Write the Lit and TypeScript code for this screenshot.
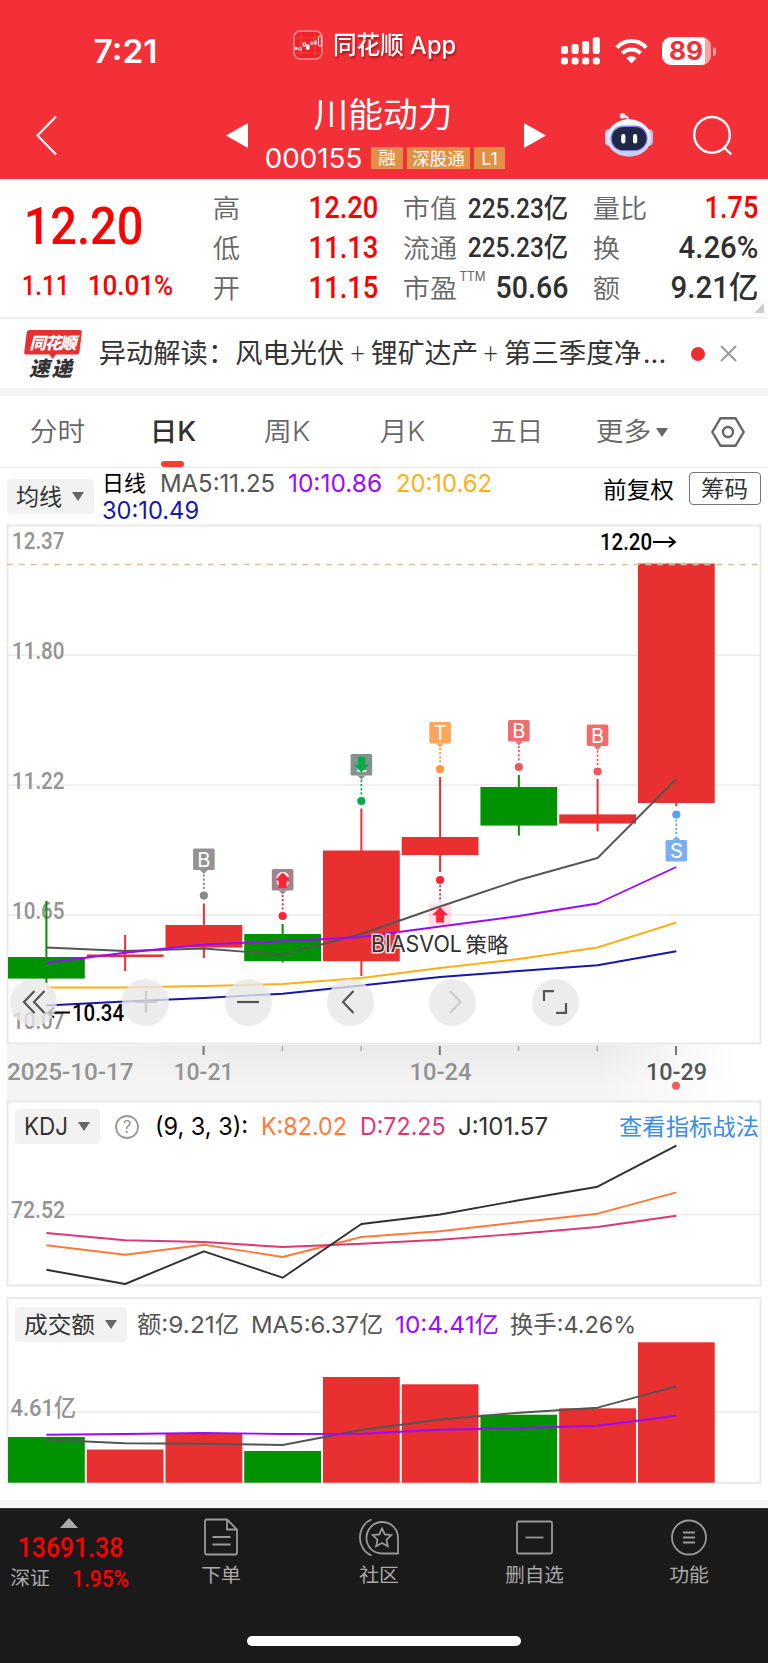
import { LitElement, html, svg, css } from "lit";
import { customElement } from "lit/decorators.js";

type Tab = { label: string; w: number; active?: boolean; more?: boolean };
type Candle = { up: boolean; top: number; bottom: number; high: number; low: number };
type Flag = {
  i: number; letter: string; y: number; dot: number; box: string; line: string; arrow?: "up" | "down"; below?: boolean;
};

const X0 = 46.4;
const STEP = 78.74;
const cx = (i: number) => X0 + STEP * i;

/** Inline text block whose height is its cap height and whose glyphs span the given width. */
const fit = (text: string, w: number, size: number, cls = "") => {
  const b = size * 0.045;
  const h = size * 0.72;
  return html`<svg class="fit ${cls}" width=${w} height=${h}>
    <text x=${-b} y=${h} font-size=${size} textLength=${w + 2 * b} lengthAdjust="spacingAndGlyphs">${text}</text>
  </svg>`;
};

/** Chart label starting at x, with its baseline at y. */
const label = (text: string, x: number, y: number, w: number, size: number, cls = "") => {
  const b = size * 0.045;
  return svg`<text class=${cls} x=${x - b} y=${y} font-size=${size} textLength=${w + 2 * b}
    lengthAdjust="spacingAndGlyphs">${text}</text>`;
};

const path = (ys: number[], cls: string) =>
  svg`<polyline class="line ${cls}" points=${ys.map((y, i) => `${cx(i)},${y}`).join(" ")}></polyline>`;

const caret = html`<svg class="caret" width="12" height="9"><path d="M0 0H12L6 9Z" fill="currentColor"/></svg>`;

const TABS: Tab[] = [
  { label: "分时", w: 53 },
  { label: "日K", w: 44, active: true },
  { label: "周K", w: 44 },
  { label: "月K", w: 43 },
  { label: "五日", w: 51 },
  { label: "更多", w: 53, more: true },
];

const CANDLES: Candle[] = [
  { up: false, top: 957, bottom: 978.6, high: 901, low: 983 },
  { up: true, top: 954.5, bottom: 957, high: 935, low: 971 },
  { up: true, top: 925, bottom: 947.6, high: 903.5, low: 958 },
  { up: false, top: 934, bottom: 961.2, high: 924, low: 962.5 },
  { up: true, top: 850.5, bottom: 961.2, high: 808.5, low: 976 },
  { up: true, top: 837, bottom: 855, high: 777, low: 872 },
  { up: false, top: 787, bottom: 825.6, high: 775, low: 835.6 },
  { up: true, top: 814.4, bottom: 823.5, high: 779, low: 831.3 },
  { up: true, top: 563.5, bottom: 803, high: 563.5, low: 806.3 },
];

const FLAGS: Flag[] = [
  { i: 2, letter: "B", y: 848.5, dot: 895.6, box: "#939393", line: "#888888" },
  { i: 3, letter: "C", y: 869, dot: 916, box: "#a1838b", line: "#ff2238", arrow: "up" },
  { i: 4, letter: "L", y: 754, dot: 801, box: "#82938b", line: "#08aa4c", arrow: "down" },
  { i: 5, letter: "T", y: 722, dot: 769.2, box: "#ffa55c", line: "#ff9a42" },
  { i: 6, letter: "B", y: 720, dot: 767, box: "#f16c6d", line: "#ea5a5c" },
  { i: 7, letter: "B", y: 724.5, dot: 771.5, box: "#f16c6d", line: "#ea5a5c" },
  { i: 8, letter: "S", y: 840, dot: 814.5, box: "#7ab0f3", line: "#5b9ff0", below: true },
];

const BARS = [1437, 1449.5, 1434, 1451, 1377, 1384.3, 1414.7, 1408.3, 1342.3];

@customElement("app-root")
export class AppRoot extends LitElement {
  static styles = css`
    :host { display: block; width: 768px; height: 1663px; overflow: hidden; background: #fff; color: #333;
      font-family: Roboto, "Noto Sans CJK SC", sans-serif; }
    * { box-sizing: border-box; }
    svg { display: block; flex: none; overflow: visible; }
    text { fill: currentColor; white-space: pre; }
    .fit { font-family: inherit; }
    .ui { font-family: Inter, "Noto Sans CJK SC", sans-serif; }
    .light { font-weight: 350; }
    .mid { font-weight: 500; }
    .semi { font-weight: 600; }
    .bold { font-weight: 700; }
    .red { color: #fe0000; }
    .dark { color: #303030; }
    .grey { color: #666; }
    .black { color: #000; }
    .c5 { color: #555; }
    .c10 { color: #9b09ff; }
    .c20 { color: #ffaf16; }
    .c30 { color: #1717a8; }
    .ck { color: #ff7a3a; }
    .cd { color: #dc3776; }
    .axis { color: #939393; }
    .letter { fill: #fff; }

    .top { height: 179px; background: #f33038; color: #fff; }
    .status { height: 91px; display: flex; align-items: flex-start; padding-left: 95px; }
    .time { padding-top: 40px; width: 198px; }
    .brand { display: flex; align-items: center; gap: 11px; padding-top: 30px; width: 268px; }
    .brand .fit { filter: drop-shadow(1px 2px 1px rgba(90, 0, 0, .55)); }
    .signals { display: flex; align-items: center; gap: 14.5px; padding-top: 37px; }
    .battery { display: flex; align-items: center; gap: 2px; }
    .cell { width: 49px; height: 28px; border-radius: 9px; display: flex; align-items: center; justify-content: center;
      background: linear-gradient(90deg, #fff 43px, #ffa0a3 43px); color: #f33038; padding-right: 1px; }
    .nub { width: 3px; height: 9px; border-radius: 0 3px 3px 0; background: #ff9a9e; }
    .titlebar { height: 88px; display: flex; align-items: center; padding-left: 36px; }
    .prev { margin-left: 169px; }
    .name { width: 276px; height: 88px; padding-top: 11px; display: flex; flex-direction: column; gap: 20.5px; }
    .name > .fit { margin-left: 66.5px; }
    .code { height: 22px; display: flex; align-items: center; padding-left: 18px; }
    .tags { display: flex; gap: 4px; margin-left: 10px; }
    .tag { height: 22px; padding: 0 8px; background: #e39047; display: flex; align-items: center; justify-content: center; }
    .tag.wide { padding: 0 6px; }
    .robot { margin-left: 58.5px; }
    .search { margin-left: 40.5px; }

    .quote { height: 140px; border-bottom: 2px solid #f1f1f1; display: flex; }
    .price { width: 214px; padding: 26.5px 0 0 23px; }
    .price > .fit { margin-left: 3px; }
    .change { display: flex; gap: 21px; margin-top: 31.5px; }
    .facts { width: 543px; padding-top: 8.5px; display: grid; grid-template-columns: 162.5px 163px 163px;
      grid-auto-rows: 39.8px; column-gap: 27px; }
    .fact { display: flex; align-items: center; justify-content: space-between; }
    .fact > .key { margin-top: 2px; display: flex; gap: 4px; }
    .sup { margin-top: -7px; }
    .corner { align-self: flex-end; margin: 0 0 4px -3px; }

    .news { height: 69px; display: flex; align-items: center; padding-left: 24px; }
    .headline { margin-left: 18px; display: flex; align-items: center; gap: 6.8px; }
    .headline .dots { margin-left: -3px; }
    .unread { width: 14px; height: 14px; border-radius: 50%; background: #e93030; margin: 0 16px 0 26px; }
    .band { height: 8px; background: #f4f4f4; }

    .tabs { height: 72px; border-bottom: 1px solid #e8e8e8; display: grid;
      grid-template-columns: 115.5px 115px 113px 117px 111.5px 120px 72px; color: #666; }
    .tab { display: flex; align-items: center; justify-content: center; gap: 6px; position: relative; padding-top: 1px; }
    .tab.on { color: #303030; }
    .tab.on::after { content: ""; position: absolute; bottom: 0; left: 45.5px; width: 23px; height: 6px; border-radius: 3px;
      background: #ff3b30; }

    .ma { height: 57px; display: flex; align-items: flex-start; padding-left: 7px; }
    .pill { height: 35px; padding: 0 10px; border-radius: 4px; background: #f2f2f2; display: flex; align-items: center;
      gap: 11px; color: #333; }
    .caret { color: #666; }
    .ma .pill { margin-top: 11px; }
    .legend { width: 510px; padding: 1.5px 0 0 9px; display: flex; flex-wrap: wrap; align-content: flex-start; column-gap: 15.5px; }
    .legend > span { height: 27.5px; display: flex; align-items: center; }
    .legend > .brk { flex: 0 0 100%; height: 0; }
    .adjust { margin-top: 12.5px; }
    .chips { width: 72px; height: 33px; margin: 4px 0 0 15.5px; border: 1px solid #777; border-radius: 4px; display: flex;
      align-items: center; justify-content: center; }

    .stack { display: grid; }
    .stack > * { grid-area: 1 / 1; }
    .tools { align-self: start; margin: 453.5px 0 0 10px; display: flex; gap: 55.4px; }
    .tool { width: 47px; height: 47px; border-radius: 50%; background: rgba(231, 231, 231, .8); display: flex;
      align-items: center; justify-content: center; }
    .tool:first-child { margin-right: 9.8px; }
    .tool svg { fill: none; stroke: #555; stroke-width: 2.2; }
    .tool.off svg { stroke: #cbcbcb; }
    .frame { fill: none; stroke: #e9e9e9; stroke-width: 2; }
    .gridline { stroke: #ebebeb; stroke-width: 1.4; }
    .line { fill: none; stroke: currentColor; stroke-width: 1.9; stroke-linejoin: round; }
    .halo { paint-order: stroke; stroke: #fff; stroke-width: 3; stroke-opacity: .8; }
    .up { fill: #e93030; stroke: none; }
    .down { fill: #009200; stroke: none; }
    .panelhead { align-self: start; display: flex; align-items: center; height: 35px; padding: 0 10px 0 15px; gap: 14.7px; }
    .kdj { margin-top: 8px; }
    .kdj .link { margin-left: auto; color: #3d8ce8; }
    .vol { margin-top: 9.5px; gap: 13.7px; }
    .vol .pill { margin-right: -2.5px; }
    .help { margin-right: 3px; }
    .spacer { height: 10px; }
    .pane { height: 186px; }
    .end { height: 17px; }

    .foot { height: 155px; background: #1a1a1a; border-top: 1px solid #333; color: #aaa; display: flex;
      flex-direction: column; align-items: center; justify-content: space-between; padding-bottom: 17px; }
    .nav { width: 768px; display: grid; grid-template-columns: 144.5px 153.5px 162px 148px 160px; }
    .index { padding: 9px 0 0 11px; display: flex; flex-direction: column; }
    .index > svg:first-child { margin-left: 49px; }
    .index > .red { margin: 9px 0 13px 8px; }
    .market { display: flex; gap: 23.5px; align-items: center; }
    .item { padding-top: 9px; display: flex; flex-direction: column; align-items: center; gap: 12px; }
    .item:last-child { padding-left: 1.5px; }
    .item > svg:first-child { fill: none; stroke: #999; stroke-width: 1.8; }
    .home { width: 274px; height: 10px; border-radius: 5px; background: #fff; }
  `;

  private header() {
    return html`<header class="top">
      <div class="status">
        <div class="time">${fit("7:21", 61, 32, "ui semi")}</div>
        <div class="brand">
          <svg width="30" height="30" viewBox="0 0 30 30" fill="none" stroke="#fff">
            <rect x="1" y="1" width="28" height="28" rx="6.5" fill="#ef2228" stroke="#ff9095" stroke-width="1.5"/>
            <path d="M3 8H27M3 23H27M8 3V27M22 3V27" stroke="#f5545a" stroke-width=".6"/>
            <rect x="2" y="17" width="2.4" height="3" fill="#fff" stroke="none"/>
            <circle cx="7.2" cy="19" r="1.5"/><rect x="10.2" y="13" width="2.4" height="3"/>
            <rect x="13.6" y="15" width="2.4" height="4" fill="#fff"/><circle cx="19" cy="13" r="1.5"/>
            <rect x="21.6" y="10.5" width="2" height="4" fill="#fff" stroke="none"/>
            <rect x="25.4" y="6" width="3" height="10" rx="1.2"/>
          </svg>
          ${fit("同花顺 App", 121, 24.5, "ui mid")}
        </div>
        <div class="signals">
          <svg width="39" height="28" fill="#fff">
            ${[9, 7, 4, 0].map((y, i) => svg`<rect x=${i * 10.6} y=${y} width="7" height=${17 - y} rx="2.2"></rect>
              <rect x=${i * 10.6} y="20.5" width="7" height="7" rx="2.5"></rect>`)}
          </svg>
          <svg width="33" height="25" viewBox="0 0 33 25" fill="none" stroke="#fff" stroke-width="4.2">
            <path d="M1.8 8.6C10-.2 23-.2 31.2 8.6"/><path d="M7.4 14.3C12.6 9.2 20.4 9.2 25.6 14.3"/>
            <path d="M16.5 24.5L11.5 19.3C14.4 16.7 18.6 16.7 21.5 19.3Z" fill="#fff" stroke="none"/>
          </svg>
          <div class="battery"><div class="cell">${fit("89", 32, 25, "ui bold")}</div><i class="nub"></i></div>
        </div>
      </div>
      <div class="titlebar">
        <svg width="21" height="39" fill="none" stroke="#fff" stroke-width="2.2"><path d="M20 .5L1.5 19.5L20 38.5"/></svg>
        <svg class="prev" width="22" height="25"><path d="M22 0V25L0 12.5Z" fill="#fff"/></svg>
        <div class="name">
          ${fit("川能动力", 136, 34.5)}
          <div class="code">
            ${fit("000155", 95, 27.5, "ui")}
            <div class="tags">
              <span class="tag">${fit("融", 16, 17)}</span>
              <span class="tag wide">${fit("深股通", 51, 17.5)}</span>
              <span class="tag">${fit("L1", 15, 17.5, "ui")}</span>
            </div>
          </div>
        </div>
        <svg width="22" height="25"><path d="M0 0V25L22 12.5Z" fill="#fff"/></svg>
        <svg class="robot" width="48" height="44" viewBox="0 0 48 44">
          <defs>
            <linearGradient id="shell" x1="0" y1="0" x2="0" y2="1"><stop offset="0" stop-color="#fff"/><stop offset="1" stop-color="#c5cdec"/></linearGradient>
            <linearGradient id="rim" x1="0" y1="0" x2="1" y2="1"><stop offset="0" stop-color="#7fc3ff"/><stop offset=".5" stop-color="#8858e8"/><stop offset="1" stop-color="#6e8ce8"/></linearGradient>
          </defs>
          <path d="M23 7C23 3 21 4 18 3" fill="none" stroke="#dfe4f7" stroke-width="2.4"/>
          <circle cx="17.5" cy="2.8" r="2.8" fill="#dfe4f7"/>
          <rect x="0" y="16" width="9" height="17" rx="4.5" fill="#c9d2f2"/><rect x="39" y="16" width="9" height="17" rx="4.5" fill="#b8c3ec"/>
          <ellipse cx="24" cy="25" rx="22" ry="18.8" fill="url(#shell)"/>
          <rect x="5.5" y="12.5" width="37" height="25.5" rx="12.5" fill="url(#rim)"/>
          <rect x="6.8" y="14" width="34.6" height="23" rx="11.5" fill="#202747"/>
          <rect x="16.2" y="21" width="4.2" height="9.5" rx="2" fill="#fff"/><rect x="28" y="21" width="4.2" height="9.5" rx="2" fill="#fff"/>
        </svg>
        <svg class="search" width="39" height="39" fill="none" stroke="#fff" stroke-width="2.4">
          <circle cx="19" cy="18.8" r="17.8"/><path d="M31 31.5L38.3 38.5"/>
        </svg>
      </div>
    </header>`;
  }

  private fact(key: unknown, value: unknown) {
    return html`<div class="fact"><span class="key">${key}</span>${value}</div>`;
  }

  private quote() {
    const k = (s: string) => fit(s, s.length * 27 - 2, 26, "grey light");
    return html`<section class="quote">
      <div class="price">
        ${fit("12.20", 115, 52.5, "red mid")}
        <div class="change">${fit("1.11", 45, 28, "red mid")}${fit("10.01%", 83, 28, "red mid")}</div>
      </div>
      <div class="facts">
        ${this.fact(k("高"), fit("12.20", 67, 31, "red mid"))}
        ${this.fact(k("市值"), fit("225.23亿", 98, 27.5, "dark mid"))}
        ${this.fact(k("量比"), fit("1.75", 51, 31, "red mid"))}
        ${this.fact(k("低"), fit("11.13", 67, 31, "red mid"))}
        ${this.fact(k("流通"), fit("225.23亿", 98, 27.5, "dark mid"))}
        ${this.fact(k("换"), fit("4.26%", 77, 31, "dark mid"))}
        ${this.fact(k("开"), fit("11.15", 67, 31, "red mid"))}
        ${this.fact(html`${k("市盈")}${fit("TTM", 25, 13, "grey ui sup")}`, fit("50.66", 70, 31, "dark mid"))}
        ${this.fact(k("额"), fit("9.21亿", 85, 31, "dark mid"))}
      </div>
      <svg class="corner" width="10" height="10"><path d="M10 0V10H0Z" fill="#ccc"/></svg>
    </section>`;
  }

  private news() {
    return html`<section class="news">
      <svg width="58" height="48" viewBox="0 0 58 48" font-weight="900" font-style="italic">
        <path d="M5.5 0H56Q58 0 57.8 2L55.5 22Q55.2 24.5 52.5 24.5H32L28.5 29L25.5 24.5H2Q0 24.5 .2 22.5L2.7 2.5Q3 0 5.5 0Z" fill="#e93030"/>
        <text class="letter" x="5.5" y="18.5" font-size="16.5" textLength="47">同花顺</text>
        <text x="5" y="45.5" font-size="20.5" textLength="43">速递</text>
      </svg>
      <div class="headline">
        ${fit("异动解读：风电光伏", 243, 27)}${fit("＋", 15, 19)}${fit("锂矿达产", 105, 27)}${fit("＋", 15, 19)}${fit("第三季度净", 135, 27)}
        ${fit("...", 21, 27, "dots ui")}
      </div>
      <i class="unread"></i>
      <svg width="15" height="15" stroke="#999" stroke-width="2"><path d="M0 0L15 15M15 0L0 15"/></svg>
    </section>
    <div class="band"></div>`;
  }

  private tabs() {
    return html`<nav class="tabs">
      ${TABS.map((t) => html`<div class="tab ${t.active ? "on" : ""}">
        ${fit(t.label, t.w, 26.5, t.active ? "mid ui" : "light ui")}${t.more ? caret : ""}</div>`)}
      <div class="tab"><svg width="34" height="30" fill="none" stroke="#666" stroke-width="2.4">
        <path d="M9.5 1.2H24.5L32.7 15L24.5 28.8H9.5L1.3 15Z" stroke-linejoin="round"/><circle cx="17" cy="15" r="5"/></svg></div>
    </nav>
    <div class="ma">
      <div class="pill">${fit("均线", 44, 23)}${caret}</div>
      <div class="legend">
        <span>${fit("日线", 42, 22, "black")}</span><span>${fit("MA5:11.25", 113, 24, "c5 ui")}</span>
        <span>${fit("10:10.86", 92, 24, "c10 ui")}</span><span>${fit("20:10.62", 94, 24, "c20 ui")}</span>
        <i class="brk"></i><span>${fit("30:10.49", 95, 24, "c30 ui")}</span>
      </div>
      <div class="adjust">${fit("前复权", 69, 23, "black")}</div>
      <div class="chips">${fit("筹码", 45, 23)}</div>
    </div>`;
  }

  private flag(f: Flag) {
    const x = cx(f.i);
    const y = f.y;
    const mid = y + 11;
    return svg`
      <rect x=${x - 10.8} y=${y} width="21.6" height="21.6" rx="1.6" fill=${f.box}></rect>
      <path d=${f.below ? `M${x - 4} ${y}L${x} ${y - 4}L${x + 4} ${y}Z` : `M${x - 4} ${y + 21.5}L${x} ${y + 25.5}L${x + 4} ${y + 21.5}Z`} fill=${f.box}></path>
      <text class="ui letter" x=${x} y=${y + 18} font-size="20" text-anchor="middle">${f.letter}</text>
      ${f.arrow ? svg`<path transform=${`translate(${x} ${mid})${f.arrow === "down" ? " scale(1 -1)" : ""}`}
        d="M0 -7.5L7.7 .5H4V8H-4V.5H-7.7Z" fill=${f.line}></path>` : ""}
      <path d=${f.below ? `M${x} ${f.dot + 5}V${y - 5}` : `M${x} ${y + 26}V${f.dot - 5}`} stroke=${f.line} stroke-width="1.7" stroke-dasharray="2.2 1.9"></path>
      <circle cx=${x} cy=${f.dot} r="4.1" fill=${f.line}></circle>`;
  }

  private chart() {
    return html`<section class="stack">
      <svg width="768" height="576" viewBox="0 525 768 576">
        <defs>
          <linearGradient id="shade" x1="0" y1="0" x2="0" y2="1"><stop offset="0" stop-color="#e9e9e9"/><stop offset=".7" stop-color="#f4f4f4"/></linearGradient>
          <linearGradient id="fadeL"><stop offset="0" stop-color="#f4f4f4"/><stop offset="1" stop-color="#f4f4f4" stop-opacity="0"/></linearGradient>
          <linearGradient id="fadeR"><stop offset="0" stop-color="#fff" stop-opacity="0"/><stop offset=".85" stop-color="#fff"/></linearGradient>
        </defs>
        <rect x="7" y="1045" width="754" height="56" fill="url(#shade)"/>
        <rect x="7" y="1045" width="260" height="56" fill="url(#fadeL)"/>
        <rect x="600" y="1045" width="161" height="56" fill="url(#fadeR)"/>
        <rect class="frame" x="7.5" y="525.5" width="753" height="518" fill="#fff"/>
        ${[655.3, 785, 915].map((y) => svg`<path class="gridline" d=${`M8 ${y}H760`}></path>`)}
        ${label("12.37", 13, 548.5, 50.5, 23.5, "axis mid")}
        ${label("11.80", 13, 658.5, 50.5, 23.5, "axis mid")}
        ${label("11.22", 13, 788.5, 50.5, 23.5, "axis mid")}
        ${label("10.65", 13, 918.5, 50.5, 23.5, "axis mid")}
        ${label("10.07", 13, 1028.5, 50.5, 23.5, "axis mid")}
        ${CANDLES.map((c, i) => svg`<g class=${c.up ? "up" : "down"}>
          <rect x=${cx(i) - 1} y=${c.high} width="2" height=${c.low - c.high}></rect>
          <rect x=${cx(i) - 38.4} y=${c.top} width="76.8" height=${c.bottom - c.top}></rect></g>`)}
        <path d="M7 564.5H758" stroke="#e0c08e" stroke-width="1.6" stroke-dasharray="6 5.82"/>
        ${path([947.5, 951, 948.5, 954.7, 934, 906.5, 880, 858, 779], "c5")}
        ${path([962.7, 952.7, 944.5, 941.3, 937, 926.5, 916, 903.5, 867], "c10")}
        ${path([987.5, 987.5, 986, 984, 978, 968, 959, 947.5, 922.5], "c20")}
        ${path([1005.5, 1001.5, 998, 993.7, 985.5, 977, 971, 965.3, 951.3], "c30")}
        ${FLAGS.map((f) => this.flag(f))}
        <rect x="428.6" y="903.5" width="23" height="23" rx="2" fill="#ff2c5c" opacity=".15"/>
        <path transform="translate(440.1 914.5)" d="M0 -7.5L7.7 .5H4V8H-4V.5H-7.7Z" fill="#ff2238"/>
        <path d="M440.1 885V902" stroke="#ff2238" stroke-width="1.7" stroke-dasharray="2.2 1.9"/>
        <circle cx="440.1" cy="880" r="4.1" fill="#ff2238"/>
        ${label("12.20", 601, 550.2, 50, 23.5, "black mid")}
        <path d="M653 542H674M669 537L675 542L669 547" fill="none" stroke="#000" stroke-width="1.9"/>
        ${label("10.34", 73, 1020.5, 50, 23.5, "black mid")}
        <path d="M70 1012.5H49M54 1007.5L48.5 1012.5L54 1017.5" fill="none" stroke="#000" stroke-width="1.9"/>
        ${label("BIASVOL", 372, 952, 89, 22.5, "dark ui halo")}
        ${label("策略", 466.5, 952, 41, 21, "dark halo")}
        ${[2, 3, 4, 5, 6, 7, 8].map((i) => {
          const major = i === 2 || i === 5 || i === 8;
          return svg`<path d=${`M${cx(i) - 0.3} 1046V${major ? 1055 : 1051}`} stroke=${major ? "#777" : "#aaa"} stroke-width=${major ? 2 : 1.5}></path>`;
        })}
        ${label("2025-10-17", 8, 1079.5, 124.5, 23.5, "axis mid")}
        ${label("10-21", 174.5, 1079.5, 58, 23.5, "axis mid")}
        ${label("10-24", 410.5, 1079.5, 60, 23.5, "axis mid")}
        ${label("10-29", 647, 1079.5, 59, 23.5, "c5 mid")}
        <circle cx="676" cy="1085.8" r="4" fill="#f25b5e"/>
      </svg>
      <div class="tools">
        <span class="tool"><svg width="22" height="24"><path d="M11.5 1L1 12L11.5 23M21.5 1L11 12L21.5 23"/></svg></span>
        <span class="tool off"><svg width="22" height="22"><path d="M11 0V22M0 11H22"/></svg></span>
        <span class="tool"><svg width="22" height="22"><path d="M0 11H22"/></svg></span>
        <span class="tool"><svg width="20" height="22"><path d="M13.5 0L3 11L13.5 22"/></svg></span>
        <span class="tool off"><svg width="8" height="22"><path d="M1 0L11.5 11L1 22"/></svg></span>
        <span class="tool"><svg width="24" height="24"><path d="M1 11V1.2H11M23 13V22.8H13"/></svg></span>
      </div>
    </section>`;
  }

  private kdj() {
    return html`<section class="stack">
      <svg class="pane" width="768" height="186" viewBox="0 1101 768 186">
        <rect class="frame" x="7.5" y="1101.5" width="753" height="184"/>
        <path class="gridline" d="M8 1214.5H760"/>
        ${label("72.52", 12, 1218, 52, 23.5, "axis mid")}
        ${path([1245.3, 1254.7, 1244.7, 1257, 1237, 1231.3, 1222.3, 1213.7, 1192.3], "ck")}
        ${path([1233, 1240.3, 1242, 1247, 1243.7, 1239.7, 1233.7, 1227, 1215.7], "cd")}
        ${path([1269.7, 1284, 1251.3, 1277.7, 1224, 1214.5, 1200.3, 1186.7, 1145.7], "dark")}
      </svg>
      <div class="panelhead kdj">
        <div class="pill">${fit("KDJ", 42, 24, "ui")}${caret}</div>
        <svg class="help ui" width="24" height="24"><circle cx="12" cy="12" r="11" fill="none" stroke="#999" stroke-width="1.8"/>
          <text x="12" y="18" font-size="17" text-anchor="middle" class="axis">?</text></svg>
        ${fit("(9, 3, 3):", 91, 24, "black ui")}${fit("K:82.02", 84, 24, "ck ui")}
        ${fit("D:72.25", 83.5, 24, "cd ui")}${fit("J:101.57", 88, 24, "dark ui")}
        <span class="link">${fit("查看指标战法", 138, 23)}</span>
      </div>
    </section>
    <div class="spacer"></div>`;
  }

  private volume() {
    return html`<section class="stack">
      <svg class="pane" width="768" height="186" viewBox="0 1297 768 186">
        <rect class="frame" x="7.5" y="1298" width="753" height="185"/>
        <path class="gridline" d="M8 1412.3H760"/>
        ${label("4.61亿", 11.5, 1416, 63.5, 23.5, "axis mid")}
        ${BARS.map((y, i) => svg`<rect class=${CANDLES[i].up ? "up" : "down"} x=${cx(i) - 38.4} y=${y} width="76.8" height=${1482.7 - y}></rect>`)}
        ${path([1439.7, 1443.3, 1443.7, 1445, 1430, 1419.5, 1412.7, 1407.7, 1386.3], "c5")}
        ${path([1434.7, 1434, 1433, 1434, 1433.7, 1429.7, 1428, 1425.7, 1415.7], "c10")}
      </svg>
      <div class="panelhead vol">
        <div class="pill">${fit("成交额", 69, 23)}${caret}</div>
        ${fit("额:9.21亿", 100, 23.5, "c5 ui")}${fit("MA5:6.37亿", 130, 23.5, "c5 ui")}
        ${fit("10:4.41亿", 102, 23.5, "c10 ui")}${fit("换手:4.26%", 124, 23.5, "c5 ui")}
      </div>
    </section>
    <div class="end"></div>
    <div class="band"></div>`;
  }

  private footer() {
    return html`<footer class="foot">
      <div class="nav">
        <div class="index">
          <svg width="18" height="10"><path d="M9 0L18 10H0Z" fill="#aaa"/></svg>
          ${fit("13691.38", 103, 27.5, "red mid")}
          <div class="market">${fit("深证", 38, 19.5)}${fit("1.95%", 55, 23.5, "red mid")}</div>
        </div>
        <div class="item">
          <svg width="34" height="38"><path d="M3 1.5H23L33 11.5V34.5Q33 36.5 31 36.5H3Q1 36.5 1 34.5V3.5Q1 1.5 3 1.5ZM23 1.5V11.5H33M8.5 19H26.5M8.5 26.5H26.5"/></svg>
          ${fit("下单", 38, 19)}
        </div>
        <div class="item">
          <svg width="40" height="38"><path d="M23 4C32 4 39 11 39 20V35.5H23C14 35.5 7.5 28.5 7.5 20S14 4 23 4Z"/>
            <path d="M12.5 1.5C-3 8 -3 31 12.5 37.5"/>
            <path d="M23 10.5L25.8 16.4L32.3 17.2L27.5 21.7L28.8 28.2L23 25L17.2 28.2L18.5 21.7L13.7 17.2L20.2 16.4Z"/></svg>
          ${fit("社区", 38, 19)}
        </div>
        <div class="item">
          <svg width="37" height="38"><rect x="1" y="3.5" width="35" height="32" rx="1.5"/><path d="M9.5 19.5H27.5"/></svg>
          ${fit("删自选", 57, 19)}
        </div>
        <div class="item">
          <svg width="36" height="38"><circle cx="18" cy="19.5" r="17"/><path d="M12 14.5H24M12 19.5H24M12 24.5H24"/></svg>
          ${fit("功能", 38, 19)}
        </div>
      </div>
      <div class="home"></div>
    </footer>`;
  }

  render() {
    return html`${this.header()}${this.quote()}${this.news()}${this.tabs()}${this.chart()}${this.kdj()}${this.volume()}${this.footer()}`;
  }
}
